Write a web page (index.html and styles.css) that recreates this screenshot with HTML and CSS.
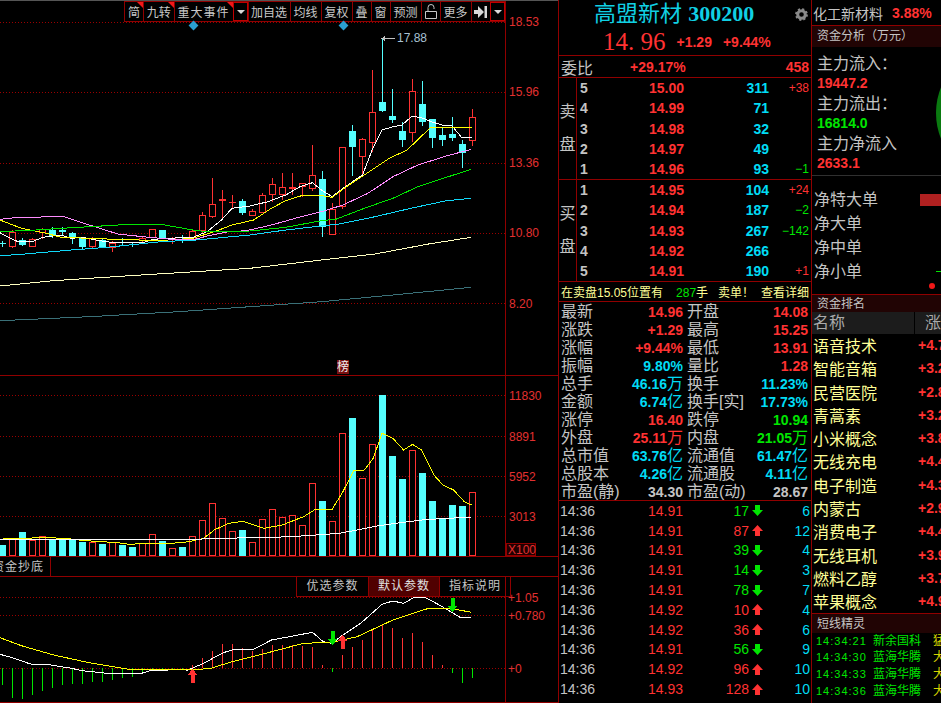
FILE: index.html
```html
<!DOCTYPE html>
<html>
<head>
    <meta charset="UTF-8">
    <title>高盟新材 300200</title>
    <link rel="stylesheet" href="styles.css">
</head>

<body>
    <svg class="defs" width="0" height="0">
        <symbol id="up" viewBox="0 0 11 11"><path d="M5.5 0 11 6H8v5H3V6H0z"/></symbol>
        <symbol id="down" viewBox="0 0 11 11"><path d="M3 0h5v5h3l-5.500 6L0 5h3z"/></symbol>
    </svg>

    <div class="screen">
        <!-- K线区 -->
        <div class="charts">
            <div class="panel main-panel">
                <svg id="main-chart" class="chart" width="558" height="374" viewBox="0 1 558 374">
                    <text class="axis" x="509" y="26">18.53</text>
                    <text class="axis" x="509" y="96">15.96</text>
                    <text class="axis" x="509" y="167">13.36</text>
                    <text class="axis" x="509" y="237">10.80</text>
                    <text class="axis" x="509" y="308">8.20</text>
                    <text class="peak" x="397" y="42">17.88</text>
                </svg>
                <div class="toolbar">
                    <span class="tool corner w-a">简</span>
                    <span class="tool corner w-b">九转</span>
                    <span class="tool corner w-c">重大事件</span>
                    <span class="tool drop w-d"><i class="caret"></i></span>
                    <span class="tool w-e">加自选</span>
                    <span class="tool w-f">均线</span>
                    <span class="tool w-f">复权</span>
                    <span class="tool w-a">叠</span>
                    <span class="tool w-a">窗</span>
                    <span class="tool w-f">预测</span>
                    <span class="tool w-a">
                        <svg width="12" height="15" viewBox="0 0 12 15"><path d="M3 7V3.500a3 3 0 0 1 6 0V5M.5 7.500h11v7H.5z" fill="none" stroke="#c8c8c8"/></svg>
                    </span>
                    <span class="tool w-f">更多</span>
                    <span class="tool w-a">
                        <svg width="13" height="12" viewBox="0 0 13 12"><path d="M0 4h4V0l6 6-6 6V8H0zM10.500 0H13v12h-2.500z" fill="#d8d8d8"/></svg>
                    </span>
                    <span class="tool drop w-d"><i class="caret"></i></span>
                </div>
                <i class="diamond d-one"></i>
                <i class="diamond d-two"></i>
                <span class="badge">榜</span>
            </div>

            <div class="panel">
                <svg id="vol-chart" class="chart" width="558" height="180" viewBox="0 376 558 180">
                    <text class="axis" x="509" y="400">11830</text>
                    <text class="axis" x="509" y="441">8891</text>
                    <text class="axis" x="509" y="481">5952</text>
                    <text class="axis" x="509" y="521">3013</text>
                    <rect class="x-box" x="506.500" y="543.500" width="29" height="12"/>
                    <text class="axis" x="508" y="554">X100</text>
                </svg>
            </div>

            <div class="tabs"><span class="tab">资金抄底</span></div>

            <div class="panel macd-panel">
                <svg id="macd-chart" class="chart" width="558" height="125" viewBox="0 577 558 125">
                    <text class="axis" x="508" y="602">+1.05</text>
                    <text class="axis" x="508" y="620">+0.780</text>
                    <text class="axis" x="508" y="673">+0</text>
                </svg>
                <div class="param-btns">
                    <span class="param">优选参数</span>
                    <span class="param active">默认参数</span>
                    <span class="param">指标说明</span>
                </div>
            </div>
        </div>

        <!-- 盘口 -->
        <div class="quote">
            <div class="q-title">
                <span class="q-name">高盟新材 <b>300200</b></span>
                <svg class="gear" width="13" height="13" viewBox="0 0 13 13"><circle cx="6.500" cy="6.500" r="3.800" fill="none" stroke="#8a8a8a" stroke-width="3"/><circle cx="6.500" cy="6.500" r="5.300" fill="none" stroke="#8a8a8a" stroke-width="2.200" stroke-dasharray="2.100 2.060"/></svg>
            </div>
            <div class="q-price">
                <span class="q-big">14. 96</span>
                <b>+1.29</b>
                <b>+9.44%</b>
            </div>
            <div class="q-ratio">
                <span class="lbl">委比</span>
                <b class="red ratio-val">+29.17%</b>
                <b class="red">458</b>
            </div>

            <div class="book">
                <div class="book-side"><span>卖</span><span>盘</span></div>
                <div class="book-rows">
                    <div class="b-row"><b class="gray">5</b><b class="red">15.00</b><b class="cyan">311</b><span class="red">+38</span></div>
                    <div class="b-row"><b class="gray">4</b><b class="red">14.99</b><b class="cyan">71</b><span></span></div>
                    <div class="b-row"><b class="gray">3</b><b class="red">14.98</b><b class="cyan">32</b><span></span></div>
                    <div class="b-row"><b class="gray">2</b><b class="red">14.97</b><b class="cyan">49</b><span></span></div>
                    <div class="b-row"><b class="gray">1</b><b class="red">14.96</b><b class="cyan">93</b><span class="green">−1</span></div>
                </div>
            </div>
            <div class="book">
                <div class="book-side"><span>买</span><span>盘</span></div>
                <div class="book-rows">
                    <div class="b-row"><b class="gray">1</b><b class="red">14.95</b><b class="cyan">104</b><span class="red">+24</span></div>
                    <div class="b-row"><b class="gray">2</b><b class="red">14.94</b><b class="cyan">187</b><span class="green">−2</span></div>
                    <div class="b-row"><b class="gray">3</b><b class="red">14.93</b><b class="cyan">267</b><span class="green">−142</span></div>
                    <div class="b-row"><b class="gray">4</b><b class="red">14.92</b><b class="cyan">266</b><span></span></div>
                    <div class="b-row"><b class="gray">5</b><b class="red">14.91</b><b class="cyan">190</b><span class="red">+1</span></div>
                </div>
            </div>

            <div class="notice">
                <span>在卖盘15.05位置有</span>
                <span class="notice-qty">287<em>手</em></span>
                <span>卖单！</span>
                <span class="notice-more">查看详细</span>
            </div>

            <div class="stats">
                <span>最新</span><b class="red">14.96</b><span class="l2">开盘</span><b class="red">14.08</b>
                <span>涨跌</span><b class="red">+1.29</b><span class="l2">最高</span><b class="red">15.25</b>
                <span>涨幅</span><b class="red">+9.44%</b><span class="l2">最低</span><b class="red">13.91</b>
                <span>振幅</span><b class="cyan">9.80%</b><span class="l2">量比</span><b class="red">1.28</b>
                <span>总手</span><b class="cyan">46.16<em>万</em></b><span class="l2">换手</span><b class="cyan">11.23%</b>
                <span>金额</span><b class="cyan">6.74<em>亿</em></b><span class="l2">换手[实]</span><b class="cyan">17.73%</b>
                <span>涨停</span><b class="red">16.40</b><span class="l2">跌停</span><b class="green">10.94</b>
                <span>外盘</span><b class="red">25.11<em>万</em></b><span class="l2">内盘</span><b class="green">21.05<em>万</em></b>
                <span>总市值</span><b class="cyan">63.76<em>亿</em></b><span class="l2">流通值</span><b class="cyan">61.47<em>亿</em></b>
                <span>总股本</span><b class="cyan">4.26<em>亿</em></b><span class="l2">流通股</span><b class="cyan">4.11<em>亿</em></b>
                <span>市盈(静)</span><b class="gray">34.30</b><span class="l2">市盈(动)</span><b class="gray">28.67</b>
            </div>

            <div class="ticks">
                <div class="t-row"><span class="gray">14:36</span><span class="red">14.91</span><span class="green">17</span><svg class="green"><use href="#down"/></svg><span class="cyan">6</span></div>
                <div class="t-row"><span class="gray">14:36</span><span class="red">14.91</span><span class="red">87</span><svg class="red"><use href="#up"/></svg><span class="cyan">12</span></div>
                <div class="t-row"><span class="gray">14:36</span><span class="red">14.91</span><span class="green">39</span><svg class="green"><use href="#down"/></svg><span class="cyan">4</span></div>
                <div class="t-row"><span class="gray">14:36</span><span class="red">14.91</span><span class="green">14</span><svg class="green"><use href="#down"/></svg><span class="cyan">3</span></div>
                <div class="t-row"><span class="gray">14:36</span><span class="red">14.91</span><span class="green">78</span><svg class="green"><use href="#down"/></svg><span class="cyan">7</span></div>
                <div class="t-row"><span class="gray">14:36</span><span class="red">14.92</span><span class="red">10</span><svg class="red"><use href="#up"/></svg><span class="cyan">4</span></div>
                <div class="t-row"><span class="gray">14:36</span><span class="red">14.92</span><span class="red">36</span><svg class="red"><use href="#up"/></svg><span class="cyan">6</span></div>
                <div class="t-row"><span class="gray">14:36</span><span class="red">14.91</span><span class="green">56</span><svg class="green"><use href="#down"/></svg><span class="cyan">9</span></div>
                <div class="t-row"><span class="gray">14:36</span><span class="red">14.92</span><span class="red">96</span><svg class="red"><use href="#up"/></svg><span class="cyan">10</span></div>
                <div class="t-row"><span class="gray">14:36</span><span class="red">14.93</span><span class="red">128</span><svg class="red"><use href="#up"/></svg><span class="cyan">10</span></div>
            </div>
        </div>

        <!-- 右侧栏 -->
        <div class="side">
            <div class="s-top"><span>化工新材料</span><b class="red">3.88%</b></div>
            <div class="s-head">资金分析（万元）</div>
            <div class="flow">
                <span>主力流入：</span><b class="red">19447.2</b>
                <span>主力流出：</span><b class="green">16814.0</b>
                <span>主力净流入</span><b class="red">2633.1</b>
                <i class="flow-pie"></i>
            </div>
            <div class="net">
                <div class="net-row"><span>净特大单</span><i class="net-bar"></i></div>
                <div class="net-row"><span>净大单</span></div>
                <div class="net-row"><span>净中单</span></div>
                <div class="net-row"><span>净小单</span><i class="net-tick"></i></div>
                <i class="net-dot"></i>
            </div>

            <div class="s-head rank-head">资金排名</div>
            <div class="rank-cols"><span>名称</span><span>涨幅</span></div>
            <div class="rank">
                <div class="r-row"><span>语音技术</span><b>+4.71</b></div>
                <div class="r-row"><span>智能音箱</span><b>+3.26</b></div>
                <div class="r-row"><span>民营医院</span><b>+2.85</b></div>
                <div class="r-row"><span>青蒿素</span><b>+3.22</b></div>
                <div class="r-row"><span>小米概念</span><b>+3.86</b></div>
                <div class="r-row"><span>无线充电</span><b>+4.41</b></div>
                <div class="r-row"><span>电子制造</span><b>+4.37</b></div>
                <div class="r-row"><span>内蒙古</span><b>+2.96</b></div>
                <div class="r-row"><span>消费电子</span><b>+4.42</b></div>
                <div class="r-row"><span>无线耳机</span><b>+3.95</b></div>
                <div class="r-row"><span>燃料乙醇</span><b>+3.71</b></div>
                <div class="r-row"><span>苹果概念</span><b>+4.93</b></div>
            </div>

            <div class="s-head elf-head">短线精灵</div>
            <div class="elf">
                <div class="e-row"><span class="e-time">14:34:21</span><span>新余国科</span><span class="e-kind">猛</span></div>
                <div class="e-row"><span class="e-time">14:34:30</span><span>蓝海华腾</span><span class="e-kind">大</span></div>
                <div class="e-row"><span class="e-time">14:34:33</span><span>蓝海华腾</span><span class="e-kind">大</span></div>
                <div class="e-row"><span class="e-time">14:34:36</span><span>蓝海华腾</span><span class="e-kind">大</span></div>
            </div>
        </div>
    </div>

    <script src="chart.js"></script>
</body>
</html>
```

FILE: styles.css
```css
* { box-sizing: border-box; }
html, body { margin: 0; height: 100%; background: #000; overflow: hidden; }
body { font-family: "Liberation Sans", "Noto Sans CJK SC", sans-serif; color: #c4c4c4; }
b { font-weight: bold; font-size: 14px; }
em { font-style: normal; font-weight: normal; font-size: 16px; }
.defs { position: absolute; }

.red { color: #ff3232; }
.green { color: #00e600; }
.cyan { color: #00dcf5; }
.gray { color: #c4c4c4; }

.screen { display: flex; width: 941px; height: 703px; }

/* charts */
.charts { width: 558px; flex: none; }
.panel { position: relative; border-bottom: 1px solid #900000; }
.main-panel { border-top: 1px solid #555; }
.macd-panel { height: 126px; }
.chart { display: block; shape-rendering: crispEdges; }
.chart text { shape-rendering: auto; }
.axis { fill: #e23030; font-size: 12px; }
.peak { fill: #a8c0d4; font-size: 12px; }
.x-box { fill: #200000; stroke: #900000; }

.toolbar {
    position: absolute; left: 124px; top: 0;
    display: flex; height: 21px;
    border-top: 1px solid #900000; border-bottom: 1px solid #900000;
    font-size: 12px; color: #c8c8c8;
}
.tool {
    position: relative;
    display: flex; align-items: center; justify-content: center;
    border-left: 1px solid #900000;
}
.drop { outline: 1px solid #c00000; outline-offset: -1px; }
.corner::after {
    content: ""; position: absolute; right: 0; top: 0;
    border-top: 6px solid #f01818; border-left: 6px solid transparent;
}
.caret { border-top: 4px solid #d8d8d8; border-left: 4px solid transparent; border-right: 4px solid transparent; }
.w-a { width: 19px; }
.w-b { width: 30.500px; }
.w-c { width: 59px; letter-spacing: 1px; }
.w-d { width: 15px; }
.w-e { width: 42px; }
.w-f { width: 31px; }

.diamond { position: absolute; top: 21px; width: 7px; height: 7px; background: #2a9fd0; transform: rotate(45deg); }
.d-one { left: 190px; }
.d-two { left: 340px; }
.badge {
    position: absolute; left: 337px; top: 359px; width: 12px; height: 14px;
    background: #7a1010; color: #f0f0f0;
    font-size: 12px; line-height: 14px; text-align: center;
}
.badge::before {
    content: ""; position: absolute; left: 2px; top: -4px; width: 13px; height: 14px;
    background: #560808; z-index: -1;
}

.tabs { height: 20px; border-bottom: 1px solid #900000; overflow: hidden; }
.tab {
    display: block; width: 51px; height: 20px;
    border-right: 1px solid #900000;
    font-size: 12px; line-height: 20px; letter-spacing: 1px; white-space: nowrap; text-indent: -8px;
}

.param-btns {
    position: absolute; left: 296px; top: 0;
    display: flex; height: 20px;
    border: 1px solid #900000; border-top: 0;
    font-size: 12px; line-height: 19px; text-align: center;
}
.param { width: 71px; letter-spacing: 1px; }
.param + .param { border-left: 1px solid #900000; }
.param.active { background: #500000; color: #e0e0e0; }

/* quote */
.quote {
    width: 254px; flex: none;
    border-left: 1px solid #900000; border-right: 1px solid #900000;
}
.q-title { display: flex; align-items: center; height: 28px; padding: 0 3px 0 35px; color: #10d0e4; }
.q-name { font-size: 22px; line-height: 28px; white-space: nowrap; }
.q-name b { font-family: "Liberation Serif", serif; font-size: 22px; }
.gear { margin-left: auto; }
.q-price {
    display: flex; align-items: center; gap: 11px;
    height: 28px; padding-left: 44px;
    border-bottom: 1px solid #900000;
    color: #ff3232;
}
.q-big { font-family: "Liberation Serif", serif; font-size: 25px; white-space: pre; }
.q-ratio {
    display: flex; align-items: center;
    height: 22px; padding: 0 2px;
    border-bottom: 1px solid #900000;
}
.lbl { font-size: 16px; width: 69px; }
.ratio-val { margin-right: auto; }

.book { display: flex; height: 102px; border-bottom: 1px solid #900000; }
.book-side {
    width: 18px; flex: none;
    display: flex; flex-direction: column; align-items: center; justify-content: center; gap: 17px;
    border-right: 1px solid #900000;
    font-size: 16px; line-height: 16px;
}
.book-rows { flex: 1; display: flex; flex-direction: column; }
.b-row {
    flex: 1;
    display: grid; grid-template-columns: 27px 77px 85px 40px; align-items: center;
    padding-left: 3px; font-size: 12px; text-align: right;
}
.b-row b:first-child { text-align: left; }

.notice {
    display: flex; align-items: center;
    height: 20px; padding: 0 2px;
    border-bottom: 1px solid #900000;
    color: #ffff96; font-size: 12px; white-space: nowrap;
}
.notice-qty { margin: 0 10px 0 13px; color: #00e600; }
.notice-qty em { color: #ffff96; font-size: 12px; }
.notice-more { margin-left: auto; }

.stats {
    display: grid; grid-template-columns: 48px 74px 52px 73px; grid-auto-rows: 18px;
    height: 199px; padding: 1px 0 0 2px;
    border-bottom: 1px solid #900000;
    font-size: 16px; line-height: 18px; white-space: nowrap;
}
.stats b { text-align: right; }
.l2 { padding-left: 4px; }

.t-row {
    display: grid; grid-template-columns: 40px 83px 66px 16px 45px; align-items: center;
    height: 19.800px; padding-left: 1px;
    font-size: 14px; text-align: right;
}
.t-row span:first-child { text-align: left; }
.t-row svg { width: 11px; height: 11px; margin-left: 3px; fill: currentColor; }

/* side */
.side { position: relative; flex: 1; min-width: 0; overflow: hidden; }
.s-top {
    display: flex; align-items: center; gap: 9px;
    height: 26px; padding-left: 1px;
    border-bottom: 1px solid #900000;
    font-size: 14px;
}
.s-head {
    height: 21px; padding-left: 5px;
    background: #210404;
    font-size: 12px; line-height: 21px;
}
.flow {
    position: relative;
    display: flex; flex-direction: column;
    height: 129px; padding: 7px 0 0 5px;
    border-bottom: 1px solid #303030;
    font-size: 16px; line-height: 20px;
    white-space: nowrap;
}
.flow b { margin: -1px 0 1px; }
.flow-pie {
    position: absolute; left: 124px; top: -3px;
    width: 138px; height: 138px; border-radius: 50%;
    background: #0a7a10;
}
.net { position: relative; height: 118px; padding-top: 12px; font-size: 16px; line-height: 24px; }
.net-row { display: flex; height: 24px; padding-left: 2px; white-space: nowrap; }
.net-bar { position: absolute; left: 108px; top: 18px; width: 30px; height: 12px; background: #b02020; }
.net-tick { position: absolute; left: 124px; top: 95px; width: 5px; height: 1px; background: #00e600; }
.net-dot { position: absolute; left: 117px; top: 107px; width: 6px; height: 6px; border-radius: 50%; background: #f01818; }

.rank-head { height: 18px; line-height: 18px; border-top: 1px solid #900000; }
.rank-cols {
    display: grid; grid-template-columns: 102px 60px; gap: 1px;
    height: 22px;
    font-size: 16px; line-height: 22px; color: #aaa; white-space: nowrap;
}
.rank-cols span { background: #1c1c1c; padding-left: 1px; }
.rank-cols span + span { padding-left: 10px; }
.rank { margin-top: -1px; }
.r-row {
    display: grid; grid-template-columns: 106px 40px; align-items: center;
    height: 23.300px;
    color: #ffff96; font-size: 16px; white-space: nowrap;
}
.r-row span { padding-left: 1px; }
.r-row b { color: #ff3232; }

.elf-head { height: 20px; line-height: 20px; border-top: 1px solid #900000; }
.elf { padding: 0 0 0 4px; font-size: 12px; line-height: 16.700px; color: #00e600; }
.e-row { display: flex; white-space: nowrap; }
.e-time { flex: none; width: 57px; letter-spacing: 1px; font-size: 11px; }
.e-row span { flex: none; }
.e-kind { margin-left: 12px; color: #d4d400; }
```

FILE: chart.js
```js
// 日K坐标都是屏幕像素，x = 2.5 + 10 * i
const RED = "#ff3232", CYAN = "#54ffff", GRID = "#9a0000", AXIS = "#900000";

// [type, bodyTop, bodyBottom, wickTop, wickBottom]
const candles = [
    ["C",243,243,241,247],["R",232,247,230,248],["C",240,245,238,246],["R",239,247,238,247],
    ["R",229,233,228,239],["C",230,236,227,238],["C",230,232,227,235],["C",233,238,232,244],
    ["C",238,247,237,249],["R",238,247,237,248],["C",240,247,238,248],["R",243,248,241,252],
    ["C",242,242,238,245],["C",244,244,243,247],["R",238,241,237,242],["R",229,238,229,238],
    ["C",230,238,230,238],["R",238,238,237,244],["C",237,237,235,243],["R",231,240,230,241],
    ["R",215,231,212,233],["R",204,217,178,218],["R",199,201,190,219],["R",202,202,195,209],
    ["C",201,213,199,215],["R",211,216,209,216],["R",195,213,193,213],["R",184,195,178,202],
    ["R",187,195,173,200],["R",187,189,173,195],["R",183,187,183,197],["R",175,189,145,191],
    ["C",179,227,171,237],["R",209,235,203,235],["R",147,207,147,209],["C",131,147,125,176],
    ["R",139,157,138,175],["R",112,143,70,152],["C",102,111,38,112],["C",116,120,89,123],
    ["C",131,140,122,147],["R",91,133,79,142],["C",104,122,81,126],["C",119,138,119,148],
    ["C",135,140,127,146],["C",134,138,117,141],["C",144,153,140,168],["R",117,141,109,146]
];

// 成交量柱顶
const volumes = [
    ["C",545],["R",539],["C",532],["R",540],["R",536],["C",539],["C",539],["C",539],
    ["C",542],["R",542],["C",544],["R",542],["C",545],["C",547],["R",543],["R",534],
    ["C",541],["R",548],["C",547],["R",536],["R",520],["R",503],["R",518],["R",531],
    ["C",530],["R",542],["R",519],["R",509],["R",517],["R",515],["R",525],["R",483],
    ["C",501],["R",521],["R",433],["C",418],["R",478],["R",444],["C",395],["C",456],
    ["C",479],["R",450],["C",473],["C",501],["C",518],["C",505],["C",506],["R",492]
];

// MACD 柱末端，零轴 668
const macd = [
    685,698,699,695,691,688,685,684,684,682,682,680,678,677,673,669,669,669,669,
    665,658,651,644,644,648,651,649,645,645,645,646,647,665,672,655,647,640,630,
    624,628,638,633,642,655,665,673,683,678
];

// 均线按放大图读点：x / 2.8，y / 3
const mainLines = [
    ["#ffffff", [[0,308],[20,320],[50,335],[90,335],[120,322],[170,315],[200,325],[230,322],[280,332],[320,338],[400,338],[430,328],[470,325],[540,322],[580,305],[620,270],[650,235],[700,228],[750,215],[800,195],[840,170],[875,158],[900,180],[930,200],[960,175],[1015,135],[1042,60],[1070,0],[1098,-9],[1126,-15],[1154,-42],[1182,-36],[1210,-24],[1238,-15],[1266,-12],[1294,24],[1322,21]]],
    ["#ffff00", [[0,270],[60,295],[130,310],[170,322],[250,325],[320,328],[390,330],[470,330],[540,325],[600,305],[650,285],[710,270],[760,235],[800,212],[850,195],[890,195],[930,202],[970,170],[1020,135],[1090,85],[1140,60],[1204,-6],[1224,-9],[1296,-9],[1322,-9]]],
    ["#ff8cff", [[0,268],[50,262],[180,260],[250,285],[330,312],[400,320],[480,328],[540,330],[580,318],[640,305],[690,302],[760,285],[850,258],[900,245],[960,225],[1030,190],[1100,140],[1170,105],[1250,78],[1320,58]]],
    ["#00e600", [[0,305],[100,300],[200,293],[300,287],[360,283],[450,283],[540,300],[580,305],[700,303],[800,292],[900,272],[940,268],[1020,235],[1100,205],[1170,170],[1250,142],[1320,118]]],
    ["#10d8f8", [[0,377],[60,373],[200,360],[300,352],[450,335],[550,330],[700,315],[800,300],[900,288],[950,282],[1050,260],[1150,235],[1250,212],[1320,205]]],
    ["#ffffc0", [[0,468],[150,452],[350,438],[500,428],[700,415],[900,390],[1050,372],[1200,342],[1320,322]]],
    ["#3a7078", [[0,572],[250,560],[500,545],[700,530],[900,515],[1100,495],[1320,472]]]
];
const volLines = [
    ["#ffff00", [[0,493],[20,491],[50,490],[130,488],[180,490],[240,497],[330,503],[360,508],[420,505],[470,506],[530,500],[570,490],[600,465],[640,445],[680,439],[740,460],[790,450],[850,425],[880,405],[930,403],[960,350],[990,288],[1020,285],[1045,250],[1070,175],[1100,190],[1130,225],[1155,208],[1180,225],[1215,300],[1240,330],[1270,345],[1300,380],[1320,390]]],
    ["#ffffff", [[0,493],[560,493],[580,490],[750,488],[860,482],[950,475],[1000,465],[1060,452],[1130,442],[1190,434],[1250,430],[1320,427]]]
];
const macdLines = [
    ["#ffffff", [[0,298],[40,310],[85,327],[130,328],[200,340],[230,347],[300,355],[390,357],[420,347],[470,348],[520,348],[570,325],[625,293],[650,285],[710,283],[760,255],[810,245],[875,232],[905,260],[930,265],[960,240],[1010,205],[1070,148],[1100,138],[1130,145],[1160,127],[1190,127],[1230,150],[1290,188],[1320,187]]],
    ["#ffff00", [[0,248],[60,272],[150,300],[250,323],[360,343],[540,345],[590,340],[650,320],[750,293],[850,265],[930,262],[1000,245],[1100,195],[1200,160],[1260,160],[1320,172]]]
];

function cx(i) { return 2.5 + 10 * i; }

function line(x1, y1, x2, y2, color) {
    return `<line x1="${x1}" y1="${y1}" x2="${x2}" y2="${y2}" stroke="${color}"/>`;
}

function box(i, top, bottom, type) {
    const x = cx(i) - 3.5;
    if (type === "C") return `<rect x="${x}" y="${top}" width="7" height="${Math.max(bottom - top, 1)}" fill="${CYAN}"/>`;
    if (bottom - top < 2) return `<rect x="${x}" y="${top}" width="7" height="${Math.max(bottom - top, 1)}" fill="${RED}"/>`;
    return `<rect x="${x + 0.5}" y="${top + 0.5}" width="6" height="${bottom - top - 1}" fill="#000" stroke="${RED}"/>`;
}

function poly(lines, originY) {
    return lines.map(([color, pts]) => {
        const p = pts.map(([x, y]) => `${(x / 2.8).toFixed(1)},${(originY + y / 3).toFixed(1)}`).join(" ");
        return `<polyline points="${p}" fill="none" stroke="${color}"/>`;
    }).join("");
}

function grid(ys) {
    return ys.map(y => `<line x1="0" y1="${y + 0.5}" x2="505" y2="${y + 0.5}" stroke="${GRID}" stroke-dasharray="1 2"/>`).join("");
}

function draw(id, html, fromY, toY) {
    const svg = document.getElementById(id);
    svg.insertAdjacentHTML("afterbegin", grid(html.ys) + line(505.5, fromY, 505.5, toY, AXIS) + html.body);
}

function arrow(x, y, up, color) {
    const d = up
        ? `M${x} ${y}l5 6h-3v8h-4v-8h-3z`
        : `M${x - 2} ${y}h4v8h3l-5 6-5-6h3z`;
    return `<path d="${d}" fill="${color}"/>`;
}

// 主图
let body = "";
candles.forEach(([type, top, bottom, wt, wb], i) => {
    const color = type === "R" ? RED : CYAN;
    body += line(cx(i), wt, cx(i), wb, color) + box(i, top, bottom, type);
});
body += poly(mainLines, 130);
body += line(382, 38.5, 395, 38.5, "#c0c0c0") + `<path d="M381 38.500l4-2.500v5z" fill="#c0c0c0"/>`;
draw("main-chart", { ys: [22, 92, 163, 233, 303], body }, 1, 375);

// 成交量
body = "";
volumes.forEach(([type, top], i) => { body += box(i, top, 556, type); });
body += poly(volLines, 375);
draw("vol-chart", { ys: [395, 436, 476, 516], body }, 376, 556);

// MACD
body = "";
macd.forEach((end, i) => {
    body += line(cx(i), 668, cx(i), end, end > 668 ? "#00e600" : RED);
});
body = body + poly(macdLines, 555);
body += arrow(192.5, 669, true, "#ff3232") + arrow(332.5, 631, false, "#00e600");
body += arrow(342.5, 635, true, "#ff3232") + arrow(452.5, 598, false, "#00e600");
draw("macd-chart", { ys: [597, 615, 668], body }, 577, 702);
```
